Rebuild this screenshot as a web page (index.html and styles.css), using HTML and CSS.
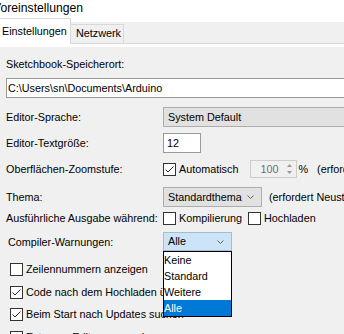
FILE: index.html
```html
<!DOCTYPE html>
<html lang="de">
<head>
    <meta charset="UTF-8">
    <title>Voreinstellungen</title>
    <link rel="stylesheet" href="styles.css">
</head>
<body>
<div class="window">
    <div class="title">Voreinstellungen</div>

    <!-- Reiter -->
    <div class="tabs">
        <div class="tab active">Einstellungen</div>
        <div class="tab other">Netzwerk</div>
    </div>

    <div class="page">
        <div class="label">Sketchbook-Speicherort:</div>
        <div class="path">C:\Users\sn\Documents\Arduino</div>

        <div class="form">
            <div class="row">
                <span class="name">Editor-Sprache:</span>
                <div class="combo wide">System Default</div>
            </div>
            <div class="row">
                <span class="name">Editor-Textgröße:</span>
                <div class="field">12</div>
            </div>
            <div class="row">
                <span class="name">Oberflächen-Zoomstufe:</span>
                <div class="box"><svg width="11" height="11" viewBox="0 0 11 11"><polyline points="1.5,5.5 4,8 9.5,2.5" fill="none" stroke="#333"/></svg></div>
                <span class="check">Automatisch</span>
                <div class="spin">
                    <span class="value">100</span>
                    <span class="arrows">
                        <svg width="5" height="3" viewBox="0 0 5 3"><polygon points="0,3 2.5,0 5,3" fill="#9a9a9a"/></svg>
                        <svg width="5" height="3" viewBox="0 0 5 3"><polygon points="0,0 2.5,3 5,0" fill="#9a9a9a"/></svg>
                    </span>
                </div>
                <span class="pct">%</span>
                <span class="note">(erfordert Neustart)</span>
            </div>
            <div class="row theme">
                <span class="name">Thema:</span>
                <div class="combo short">Standardthema
                    <svg width="7" height="4" viewBox="0 0 7 4"><polyline points="0.5,0.5 3.5,3.5 6.5,0.5" fill="none" stroke="#606060"/></svg>
                </div>
                <span class="note near">(erfordert Neustart)</span>
            </div>
            <div class="row verbose">
                <span class="name">Ausführliche Ausgabe während:</span>
                <div class="box"></div>
                <span class="check">Kompilierung</span>
                <div class="box second"></div>
                <span class="check">Hochladen</span>
            </div>
            <div class="row warn">
                <span class="name">Compiler-Warnungen:</span>
                <div class="combo open">Alle
                    <svg width="7" height="4" viewBox="0 0 7 4"><polyline points="0.5,0.5 3.5,3.5 6.5,0.5" fill="none" stroke="#606060"/></svg>
                    <ul class="list">
                        <li>Keine</li>
                        <li>Standard</li>
                        <li>Weitere</li>
                        <li class="sel">Alle</li>
                    </ul>
                </div>
            </div>
        </div>

        <div class="options">
            <div class="opt"><div class="box"></div><span class="check">Zeilennummern anzeigen</span></div>
            <div class="opt"><div class="box"><svg width="11" height="11" viewBox="0 0 11 11"><polyline points="1.5,5.5 4,8 9.5,2.5" fill="none" stroke="#333"/></svg></div><span class="check">Code nach dem Hochladen überprüfen</span></div>
            <div class="opt"><div class="box"><svg width="11" height="11" viewBox="0 0 11 11"><polyline points="1.5,5.5 4,8 9.5,2.5" fill="none" stroke="#333"/></svg></div><span class="check">Beim Start nach Updates suchen</span></div>
            <div class="opt"><div class="box"></div><span class="check">Externen Editor verwenden</span></div>
        </div>
    </div>
</div>
</body>
</html>
```

FILE: styles.css
```css
* {
    box-sizing: border-box;
}
html, body {
    margin: 0;
    padding: 0;
    overflow: hidden;
}
body {
    font-family: "Liberation Sans", Arial, sans-serif;
    font-size: 10.8px;
    color: #000;
    background: #f0f0f0;
}

.window {
    width: 560px;
    height: 334px;
    background: #f0f0f0;
}

/* Titel */
.title {
    height: 18px;
    background: #fff;
    font-size: 12.2px;
    line-height: 16px;
    text-indent: -7px;
    white-space: nowrap;
}

/* Reiter */
.tabs {
    display: flex;
    align-items: flex-end;
    height: 26px;
    background: linear-gradient(#fff 4px, #f0f0f0 4px);
    border-bottom: 1px solid #d9d9d9;
}
.tab {
    line-height: 13px;
    border: 1px solid #d9d9d9;
    border-bottom: 0;
    white-space: nowrap;
}
.tab.active {
    width: 73px;
    height: 26px;
    margin-left: -2px;
    margin-bottom: -1px;
    padding: 6px 0 0 3px;
    background: #fff;
}
.tab.other {
    width: 53px;
    height: 19px;
    padding: 2px 0 0 5px;
    border-left: 0;
}

/* Seite */
.page {
    border-top: 3px solid #fff;
    padding: 11px 0 0 6px;
}
.label {
    line-height: 13px;
    white-space: nowrap;
}
.path {
    margin-top: 7px;
    width: 500px;
    height: 20px;
    padding-left: 1px;
    line-height: 18px;
    background: #fff;
    border: 1px solid #9a9a9a;
}

.form {
    margin-top: 9px;
}
.row {
    display: flex;
    align-items: center;
    height: 20px;
    margin-top: 6px;
    white-space: nowrap;
}
.row:first-child { margin-top: 0; }
.row.theme { margin-top: 8px; }
.row.verbose { margin-top: 1px; }
.row.warn { margin-top: 4px; height: 19px; }

.name {
    flex: none;
    width: 157px;
}
.row.warn .name { padding-left: 2px; }

.combo {
    position: relative;
    display: flex;
    align-items: center;
    justify-content: space-between;
    height: 20px;
    padding: 0 7px 0 4px;
    line-height: 18px;
    background: #e1e1e1;
    border: 1px solid #adadad;
}
.combo.wide { width: 300px; }
.combo.short { width: 99px; }
.combo.open {
    width: 69px;
    height: 19px;
    line-height: 17px;
    background: #cce4f7;
    border-color: #a4bdd4;
}

.list {
    position: absolute;
    left: -1px;
    top: calc(100% + 1px);
    z-index: 2;
    width: 69px;
    margin: 0;
    padding: 0;
    list-style: none;
    background: #fff;
    border: 1px solid #000;
}
.list li {
    height: 16px;
    line-height: 17px;
}
.list li.sel {
    background: #0078d7;
    color: #fff;
}

.field {
    width: 38px;
    height: 20px;
    padding-left: 3px;
    line-height: 18px;
    background: #fff;
    border: 1px solid #9a9a9a;
}

/* Kontrollkaestchen */
.box {
    flex: none;
    width: 13px;
    height: 13px;
    background: #fff;
    border: 1px solid #333;
}
.box svg { display: block; }
.box.second { margin-left: 6px; }
.check {
    margin-left: 3px;
    line-height: 13px;
}

/* Zoom-Feld */
.spin {
    display: flex;
    width: 47px;
    height: 18px;
    margin-left: 12px;
    border: 1px solid #cccccc;
    background: #f0f0f0;
}
.spin .value {
    flex: 1;
    padding-right: 4px;
    text-align: right;
    line-height: 16px;
    color: #6d6d6d;
}
.spin .arrows {
    display: flex;
    flex-direction: column;
    justify-content: space-around;
    align-items: center;
    width: 14px;
    padding: 1px 0;
}
.spin .arrows svg { display: block; }
.pct { margin-left: 1px; }
.note { margin-left: 9px; }
.note.near { margin-left: 7px; }

/* Optionen */
.options {
    margin-top: 12px;
    padding-left: 4px;
}
.opt {
    display: flex;
    align-items: center;
    height: 13px;
    margin-top: 10px;
    white-space: nowrap;
}
.opt:first-child { margin-top: 0; }
.opt:nth-child(3) { margin-top: 9px; }
.opt:nth-child(4) { margin-top: 10px; }
```
